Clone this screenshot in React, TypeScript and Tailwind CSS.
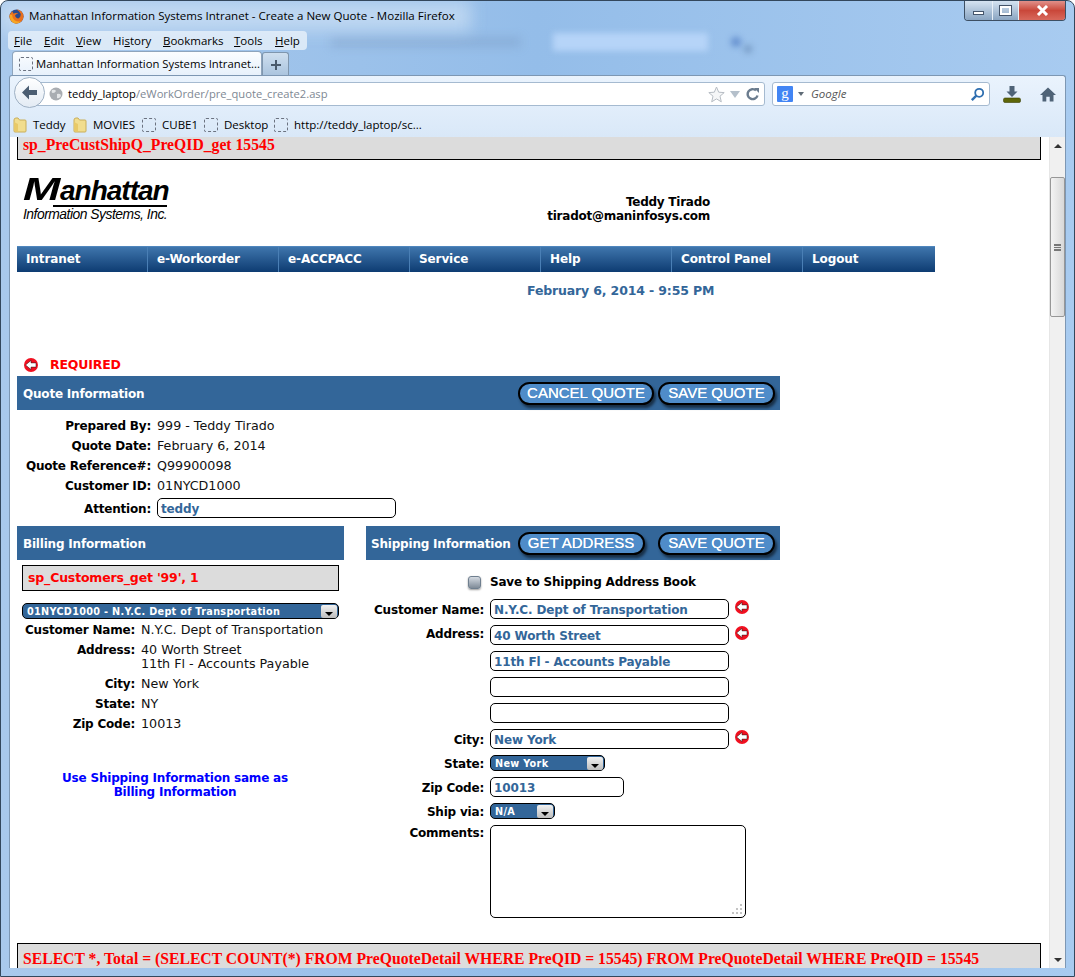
import React from "react";

const ArrowDot = ({ size = 14 }: { size?: number }) => (
  <svg width={size} height={size} viewBox="0 0 14 14" className="shrink-0">
    <circle cx="7" cy="7" r="7" fill="#f01020" />
    <path d="M1.6 7 L7 2.4 V4.9 H12 V9.1 H7 V11.6 Z" fill="#fff" stroke="#1a1a1a" strokeWidth="0.5" />
  </svg>
);

const Dashed = () => (
  <span className="inline-block w-[14px] h-[14px] shrink-0 rounded-[2px] border border-dashed border-[#6b7280]" />
);

const Folder = () => (
  <svg width="14" height="16" viewBox="0 0 14 16" className="shrink-0">
    <path d="M1 3 Q1 1 3 1 H5 L6.5 3 H12 Q13 3 13 4 V14 Q13 15 12 15 H2 Q1 15 1 14 Z" fill="#f1dd8e" stroke="#c9ae5b" />
    <path d="M1 14 V5 L5 7 V15 Z" fill="#e8c968" />
  </svg>
);

const MenuItem = ({ children, w }: { children: React.ReactNode; w: string }) => (
  <div className={`${w} shrink-0`}>{children}</div>
);

const Header = ({ title, className, children }: { title: string; className: string; children?: React.ReactNode }) => (
  <div className={`${className} h-[34px] bg-[#336699] flex items-center text-white font-bold text-[12px] tracking-[-0.2px] shrink-0`}>
    <span className="whitespace-nowrap pt-[2px]">{title}</span>
    {children}
  </div>
);

const PillButton = ({ label, className }: { label: string; className: string }) => (
  <button className={`${className} h-[23px] mt-[1px] rounded-full border-2 border-black bg-[#4f8cc9] text-white text-[15px] tracking-normal leading-none [font-family:'Liberation_Sans',Arial,sans-serif] font-normal [text-shadow:0_0_0.6px_#fff] shadow-[2px_3px_3px_rgba(0,0,0,0.55)] shrink-0 flex items-center justify-center pb-[3px]`}>
    {label}
  </button>
);

const InfoRow = ({ label, value, lw, h = "h-[20px]" }: { label: string; value: React.ReactNode; lw: string; h?: string }) => (
  <div className={`flex ${h} items-start`}>
    <div className={`${lw} text-right font-bold text-[12px] tracking-[-0.2px] text-black shrink-0 whitespace-nowrap leading-[14px]`}>{label}</div>
    <div className="ml-[6px] text-[#111] leading-[14px] whitespace-nowrap">{value}</div>
  </div>
);

const Field = ({ value, className }: { value?: string; className: string }) => (
  <div className={`${className} h-[20px] rounded-[5px] border border-black bg-white px-[3px] font-bold text-[12px] tracking-[-0.13px] text-[#336699] leading-[20px] whitespace-nowrap shrink-0`}>
    {value}
  </div>
);

const SelectBox = ({ value, className }: { value: string; className: string }) => (
  <div className={`${className} h-[16px] rounded-[5px] border border-black bg-[#336699] flex items-center pl-[4px] pr-[1px] shrink-0`}>
    <span className="text-[9.7px] tracking-[0.3px] flex-1 font-bold text-white whitespace-nowrap leading-[14px] pt-[1px] overflow-hidden">{value}</span>
    <span className="w-[16px] h-[13px] bg-gradient-to-b from-[#f2f2f2] to-[#bdbdbd] rounded-[2px] flex items-end justify-center pb-[2px]">
      <svg width="8" height="4" viewBox="0 0 8 4"><path d="M0 0H8L4 4Z" fill="#000" /></svg>
    </span>
  </div>
);

const ShipRow = ({ label, children, h = "h-[26px]", lh = "leading-[22px]" }: { label?: string; children: React.ReactNode; h?: string; lh?: string }) => (
  <div className={`flex ${h} items-start`}>
    <div className={`w-[118px] text-right font-bold text-[12px] tracking-[-0.2px] text-black shrink-0 whitespace-nowrap ${lh} mr-[6px]`}>{label}</div>
    {children}
  </div>
);

export default function App() {
  const ui = "[font-family:'Open_Sans','Noto_Sans',sans-serif]";
  return (
    <div className={`relative w-[1075px] h-[977px] overflow-hidden rounded-t-[8px] border border-[#33475c] bg-gradient-to-r from-[#a9c9ec] via-[#94bde9] to-[#a8cbf0] ${ui} text-[11.5px] text-black flex flex-col`}>
      {/* Aero blur behind the title bar */}
      <div aria-hidden className="absolute left-[330px] top-[36px] w-[190px] h-[10px] bg-[#6f8fb5]/30 blur-[5px]" />
      <div aria-hidden className="absolute left-[552px] top-[32px] w-[155px] h-[18px] bg-[#b6d4f8] blur-[3px]" />
      <div aria-hidden className="absolute left-[730px] top-[36px] w-[10px] h-[10px] rounded-full bg-[#4a78c0]/70 blur-[3px]" />
      <div aria-hidden className="absolute left-[743px] top-[44px] w-[8px] h-[8px] rounded-full bg-[#5a7da8]/60 blur-[3px]" />
      <div aria-hidden className="absolute left-[0px] top-[0px] w-[470px] h-[30px] bg-[#d6e6f7]/60 blur-[8px]" />

      {/* Title bar */}
      <div className="relative flex h-[30px] items-center pl-[8px] shrink-0">
        <svg width="15" height="15" viewBox="0 0 16 16" className="shrink-0">
          <circle cx="8" cy="8" r="7.5" fill="#2a4a8c" />
          <path d="M8 0.5 A7.5 7.5 0 1 1 0.8 6 Q2 3 4 2.4 Q3.8 4 5 5 Q7 3.4 10 5 Q7 5 6.5 7 Q7 10 10 10 Q13 9 12.4 5 Q11 2 8 0.5Z" fill="#e9711c" />
          <path d="M0.8 6 Q0 11 4 14.5 Q9 17 13 13 Q9 14 6 12 Q3 9 3.5 6Z" fill="#f6a623" />
        </svg>
        <span className="ml-[5px] text-[11.55px] whitespace-nowrap">Manhattan Information Systems Intranet - Create a New Quote - Mozilla Firefox</span>
        {/* window controls */}
        <div className="absolute right-[8px] top-0 flex h-[20px] rounded-b-[4px] border border-t-0 border-[#3d4f63] overflow-hidden">
          <div className="w-[28px] bg-gradient-to-b from-[#d5e3f1] to-[#8aa5c2] border-r border-[#e8f0f8] flex items-center justify-center">
            <span className="w-[11px] h-[4px] mt-[4px] bg-white border border-[#44546a]" />
          </div>
          <div className="w-[26px] bg-gradient-to-b from-[#d5e3f1] to-[#8aa5c2] border-r border-[#e8f0f8] flex items-center justify-center">
            <span className="w-[11px] h-[9px] border-2 border-white outline outline-1 outline-[#44546a]" />
          </div>
          <div className="w-[46px] bg-gradient-to-b from-[#e0908a] via-[#c9473a] to-[#d8685c] flex items-center justify-center">
            <svg width="13" height="11" viewBox="0 0 13 11"><path d="M2 1 L11 10 M11 1 L2 10" stroke="#fff" strokeWidth="3" /></svg>
          </div>
        </div>
      </div>

      {/* Menu bar */}
      <div className="relative ml-[7px] w-[299px] h-[19px] rounded-[4px] bg-[#e4eef9]/85 flex items-center shrink-0 pl-[6px]">
        <MenuItem w="w-[30px]"><u>F</u>ile</MenuItem>
        <MenuItem w="w-[32px]"><u>E</u>dit</MenuItem>
        <MenuItem w="w-[37px]"><u>V</u>iew</MenuItem>
        <MenuItem w="w-[50px]">Hi<u>s</u>tory</MenuItem>
        <MenuItem w="w-[71px]"><u>B</u>ookmarks</MenuItem>
        <MenuItem w="w-[41px]"><u>T</u>ools</MenuItem>
        <MenuItem w="w-[30px]"><u>H</u>elp</MenuItem>
      </div>

      {/* Tab strip */}
      <div className="relative flex h-[26px] ml-[11px] items-end shrink-0">
        <div className="w-[250px] h-[25px] rounded-t-[4px] border border-b-0 border-[#8ea4bc] bg-gradient-to-b from-[#fbfdff] to-[#e6f0fb] flex items-center pl-[6px] whitespace-nowrap overflow-hidden">
          <Dashed />
          <span className="ml-[3px] text-[11.3px]">Manhattan Information Systems Intranet...</span>
        </div>
        <div className="w-[27px] h-[24px] rounded-t-[3px] border border-b-0 border-[#7f96ae] bg-gradient-to-b from-[#cfdfef] to-[#a9c3de] flex items-center justify-center">
          <svg width="12" height="12" viewBox="0 0 12 12"><path d="M6 1V11M1 6H11" stroke="#4a5a6c" strokeWidth="2" /></svg>
        </div>
      </div>

      {/* Nav + bookmarks panel */}
      <div className="relative mx-[8px] h-[62px] rounded-t-[3px] border border-b-0 border-[#7d97b3] bg-gradient-to-b from-[#eaf3fd] to-[#d9e8f8] shrink-0 -mt-[1px]">
        {/* Back button sits over the location bar */}
        <div className="absolute z-10 left-[4px] top-[1px] w-[31px] h-[31px] rounded-full border border-[#9fb1c4] bg-gradient-to-b from-white to-[#e3ebf4] flex items-center justify-center">
          <svg width="17" height="15" viewBox="0 0 17 15"><path d="M8 0.5 L1 7.5 8 14.5 V10 H16 V5 H8Z" fill="#4c5e72" /></svg>
        </div>
        <div className="flex h-[36px] items-center pl-[6px]">
          <div className="flex h-[24px] w-[735px] items-center rounded-[3px] border border-[#a5bad0] bg-white ml-[14px] pl-[18px] pr-[4px] shrink-0">
            <svg width="14" height="14" viewBox="0 0 14 14" className="shrink-0">
              <circle cx="7" cy="7" r="6.5" fill="#a9adb2" />
              <path d="M3 3 Q6 2 7 4 Q6 6 4 6 Q2 6 3 3Z M8 7 Q12 6 12 9 Q10 12 8 11Z" fill="#e3e5e7" />
            </svg>
            <span className="ml-[5px] text-[11.2px] whitespace-nowrap">teddy_laptop<span className="text-[#7e8893]">/eWorkOrder/pre_quote_create2.asp</span></span>
            <div className="ml-auto flex items-center gap-[5px]">
              <svg width="17" height="17" viewBox="0 0 17 17"><path d="M8.5 1 L10.7 6.2 16.2 6.6 12 10.2 13.3 15.8 8.5 12.9 3.7 15.8 5 10.2 0.8 6.6 6.3 6.2Z" fill="#f5f6f7" stroke="#b6bcc3" /></svg>
              <svg width="10" height="7" viewBox="0 0 10 7"><path d="M0 0H10L5 7Z" fill="#b5c0cb" /></svg>
              <svg width="14" height="14" viewBox="0 0 14 14" className="ml-[1px]"><path d="M11.5 8.5 A5 5 0 1 1 10 3.4" fill="none" stroke="#6b7c8e" strokeWidth="2.4" /><path d="M8 1 L13 1 L13 6Z" fill="#6b7c8e" /></svg>
            </div>
          </div>
          <div className="flex h-[24px] w-[218px] items-center rounded-[3px] border border-[#a5bad0] bg-white ml-[7px] pl-[4px] pr-[4px] shrink-0">
            <span className="w-[16px] h-[16px] rounded-[1px] bg-[#4285f4] text-white text-[15px] leading-[15px] text-center [font-family:'Liberation_Serif',serif] shrink-0">g</span>
            <svg width="6" height="4" viewBox="0 0 6 4" className="ml-[5px]"><path d="M0 0H6L3 4Z" fill="#5f6b76" /></svg>
            <span className="ml-[7px] italic text-[#555]">Google</span>
            <svg width="15" height="15" viewBox="0 0 15 15" className="ml-auto"><circle cx="9.2" cy="5.8" r="4" fill="none" stroke="#2f6fb0" strokeWidth="1.8" /><path d="M6.4 8.6 L1.8 13.2" stroke="#2f6fb0" strokeWidth="2.4" /></svg>
          </div>
          <svg width="18" height="18" viewBox="0 0 18 18" className="ml-[13px] shrink-0"><path d="M6.5 1H11.5V6.5H14.5L9 12 3.5 6.5H6.5Z" fill="#4f6377" /><rect x="0.5" y="13" width="17" height="4.5" rx="1.5" fill="#5e6608" stroke="#3a4005" strokeWidth="0.6" /></svg>
          <svg width="16" height="15" viewBox="0 0 16 15" className="ml-[19px] shrink-0"><path d="M8 0.5 L16 8 H13.5 V14.5 H9.7 V9.7 H6.3 V14.5 H2.5 V8 H0Z" fill="#4f6377" /></svg>
        </div>
        <div className="flex h-[25px] items-center pl-[3px] whitespace-nowrap">
          <Folder /><span className="ml-[6px] w-[33px]">Teddy</span>
          <span className="ml-[7px]"><Folder /></span><span className="ml-[6px] w-[42px]">MOVIES</span>
          <span className="ml-[7px] flex"><Dashed /></span><span className="ml-[6px] w-[34px]">CUBE1</span>
          <span className="ml-[8px] flex"><Dashed /></span><span className="ml-[6px] w-[43px]">Desktop</span>
          <span className="ml-[7px] flex"><Dashed /></span><span className="ml-[6px]">http://teddy_laptop/sc...</span>
        </div>
      </div>

      {/* Content + scrollbar */}
      <div className="relative mx-[8px] flex flex-1 min-h-0 border-x border-[#7d97b3] bg-white mb-[8px] overflow-hidden [font-family:'DejaVu_Sans',Verdana,sans-serif] text-[12.7px]">
        <div className="flex-1 min-w-0 pl-[7px] flex flex-col">
          <div className="w-[1024px] h-[23px] border-x border-b border-black bg-[#dcdcdc] pl-[5px] [font-family:'Liberation_Serif',serif] font-bold text-[15.7px] text-[#ff0000] leading-[16px] shrink-0">
            sp_PreCustShipQ_PreQID_get 15545
          </div>

          {/* logo + user */}
          <div className="relative flex h-[86px] shrink-0 w-[700px]">
            <div className="ml-[6px] mt-[11px] w-[150px] relative leading-none [font-family:'Liberation_Sans',Arial,sans-serif] text-black italic">
              <div className="flex items-baseline font-bold text-[28px] tracking-[-1px] leading-[36px] whitespace-nowrap">
                <span className="inline-block w-[37px] text-[32px] tracking-normal origin-left scale-x-[1.4]">M</span>
                <span>anhattan</span>
              </div>
              <div className="h-[2px] bg-black ml-[30px] w-[114px] -mt-[4px]" />
              <div className="text-[13.9px] tracking-[-0.5px] leading-[14px] whitespace-nowrap">Information Systems, Inc.</div>
            </div>
            <div className="absolute right-[7px] top-[35px] text-right font-bold text-black text-[12px] tracking-[-0.25px] leading-[14px]">
              <div>Teddy Tirado</div>
              <div>tiradot@maninfosys.com</div>
            </div>
          </div>

          {/* nav */}
          <div className="flex w-[918px] h-[26px] shrink-0 border-t border-[#4f86bd] bg-gradient-to-b from-[#3f76ad] to-[#0d3c72] text-white font-bold text-[12px] tracking-[-0.1px]">
            {["Intranet", "e-Workorder", "e-ACCPACC", "Service", "Help", "Control Panel", "Logout"].map((n) => (
              <div key={n} className="w-[131px] border-r border-[#4a7fb5] last:border-r-0 pl-[9px] leading-[25px]">{n}</div>
            ))}
          </div>

          <div className="ml-[510px] mt-[12px] h-[14px] font-bold text-[#336699] text-[12.5px] tracking-[-0.15px] leading-[14px] whitespace-nowrap shrink-0">February 6, 2014 - 9:55 PM</div>

          <div className="mt-[59px] ml-[7px] flex items-center h-[16px] shrink-0 font-bold text-[12.5px] tracking-[-0.17px] text-[#ff0000]">
            <ArrowDot /><span className="ml-[12px]">REQUIRED</span>
          </div>

          <Header title="Quote Information" className="mt-[3px] w-[763px] pl-[6px]">
            <PillButton label="CANCEL QUOTE" className="ml-auto w-[136px]" />
            <PillButton label="SAVE QUOTE" className="ml-[4px] mr-[5px] w-[117px]" />
          </Header>

          <div className="pt-[9px] shrink-0">
            <InfoRow lw="w-[134px]" label="Prepared By:" value="999 - Teddy Tirado" />
            <InfoRow lw="w-[134px]" label="Quote Date:" value="February 6, 2014" />
            <InfoRow lw="w-[134px]" label="Quote Reference#:" value="Q99900098" />
            <InfoRow lw="w-[134px]" label="Customer ID:" value="01NYCD1000" />
            <div className="flex h-[21px] items-start">
              <div className="w-[134px] text-right font-bold text-[12px] tracking-[-0.2px] text-black leading-[20px]">Attention:</div>
              <Field value="teddy" className="ml-[6px] w-[239px] -mt-[1px]" />
            </div>
          </div>

          <div className="flex mt-[6px] shrink-0 w-[763px]">
            {/* Billing */}
            <div className="w-[327px] shrink-0">
              <Header title="Billing Information" className="w-[327px] pl-[6px]" />
              <div className="ml-[5px] mt-[5px] w-[317px] h-[26px] border border-black bg-[#dcdcdc] pl-[5px] font-bold text-[12.5px] tracking-[-0.17px] text-[#ff0000] leading-[24px]">sp_Customers_get '99', 1</div>
              <SelectBox value="01NYCD1000 - N.Y.C. Dept of Transportation" className="ml-[5px] mt-[12px] w-[317px]" />
              <div className="pt-[4px]">
                <InfoRow lw="w-[118px]" label="Customer Name:" value="N.Y.C. Dept of Transportation" />
                <InfoRow lw="w-[118px]" h="h-[34px]" label="Address:" value={<>40 Worth Street<br />11th Fl - Accounts Payable</>} />
                <InfoRow lw="w-[118px]" label="City:" value="New York" />
                <InfoRow lw="w-[118px]" label="State:" value="NY" />
                <InfoRow lw="w-[118px]" label="Zip Code:" value="10013" />
              </div>
              <div className="mt-[34px] w-[316px] text-center font-bold text-[12px] tracking-[-0.2px] text-[#0000ff] leading-[14px]">
                Use Shipping Information same as<br />Billing Information
              </div>
            </div>

            {/* Shipping */}
            <div className="ml-[22px] w-[414px] shrink-0">
              <Header title="Shipping Information" className="w-[414px] pl-[5px]">
                <PillButton label="GET ADDRESS" className="ml-[7px] w-[127px]" />
                <PillButton label="SAVE QUOTE" className="ml-auto mr-[5px] w-[117px]" />
              </Header>
              <div className="flex items-center h-[14px] mt-[15px] pl-[102px] font-bold text-[12px] tracking-[-0.2px] text-black whitespace-nowrap">
                <span className="w-[13px] h-[13px] rounded-[3px] border border-[#6f7f8f] bg-gradient-to-b from-[#d5dbe2] to-[#7f8b98] shadow-[0_1px_2px_rgba(0,0,0,0.4)]" />
                <span className="ml-[9px]">Save to Shipping Address Book</span>
              </div>
              <div className="mt-[10px]">
                <ShipRow label="Customer Name:">
                  <Field value="N.Y.C. Dept of Transportation" className="w-[239px]" />
                  <span className="ml-[6px] mt-[1px]"><ArrowDot /></span>
                </ShipRow>
                <ShipRow label="Address:" lh="leading-[18px]">
                  <Field value="40 Worth Street" className="w-[239px]" />
                  <span className="ml-[6px] mt-[1px]"><ArrowDot /></span>
                </ShipRow>
                <ShipRow><Field value="11th Fl - Accounts Payable" className="w-[239px]" /></ShipRow>
                <ShipRow><Field className="w-[239px]" /></ShipRow>
                <ShipRow><Field className="w-[239px]" /></ShipRow>
                <ShipRow label="City:">
                  <Field value="New York" className="w-[239px]" />
                  <span className="ml-[6px] mt-[1px]"><ArrowDot /></span>
                </ShipRow>
                <ShipRow label="State:" h="h-[22px]" lh="leading-[18px]"><SelectBox value="New York" className="w-[115px]" /></ShipRow>
                <ShipRow label="Zip Code:"><Field value="10013" className="w-[134px]" /></ShipRow>
                <ShipRow label="Ship via:" h="h-[22px]" lh="leading-[18px]"><SelectBox value="N/A" className="w-[65px]" /></ShipRow>
                <div className="flex">
                  <div className="w-[118px] text-right font-bold text-[12px] tracking-[-0.2px] text-black whitespace-nowrap leading-[16px] mr-[6px]">Comments:</div>
                  <div className="relative w-[256px] h-[93px] rounded-[5px] border border-black bg-white shrink-0">
                    <svg width="12" height="12" viewBox="0 0 12 12" className="absolute right-[2px] bottom-[2px]">
                      <g fill="#c4c4c4">
                        <rect x="9" y="1" width="2" height="2" /><rect x="5" y="5" width="2" height="2" /><rect x="9" y="5" width="2" height="2" />
                        <rect x="1" y="9" width="2" height="2" /><rect x="5" y="9" width="2" height="2" /><rect x="9" y="9" width="2" height="2" />
                      </g>
                    </svg>
                  </div>
                </div>
              </div>
            </div>
          </div>

          <div className="mt-[25px] w-[1024px] h-[40px] border border-black bg-[#dcdcdc] pl-[5px] [font-family:'Liberation_Serif',serif] font-bold text-[15.7px] text-[#ff0000] leading-[29px] whitespace-nowrap shrink-0">
            SELECT *, Total = (SELECT COUNT(*) FROM PreQuoteDetail WHERE PreQID = 15545) FROM PreQuoteDetail WHERE PreQID = 15545
          </div>
        </div>

        {/* Scrollbar */}
        <div className="w-[16px] shrink-0 bg-[#f0f0f0] border-l border-[#e6e6e6] flex flex-col items-center">
          <div className="h-[17px] flex items-center justify-center shrink-0">
            <svg width="8" height="4" viewBox="0 0 8 4"><path d="M0 4H8L4 0Z" fill="#333" /></svg>
          </div>
          <div className="mt-[23px] w-[15px] h-[140px] rounded-[2px] border border-[#979797] bg-gradient-to-r from-[#f3f3f3] to-[#d8d8d8] flex items-center justify-center shrink-0">
            <span className="w-[7px] h-[7px] border-y-2 border-[#777] relative after:absolute after:left-0 after:right-0 after:top-[1px] after:h-[1px] after:bg-[#777]" />
          </div>
          <div className="mt-auto h-[17px] flex items-center justify-center shrink-0">
            <svg width="8" height="4" viewBox="0 0 8 4"><path d="M0 0H8L4 4Z" fill="#333" /></svg>
          </div>
        </div>
      </div>
    </div>
  );
}
